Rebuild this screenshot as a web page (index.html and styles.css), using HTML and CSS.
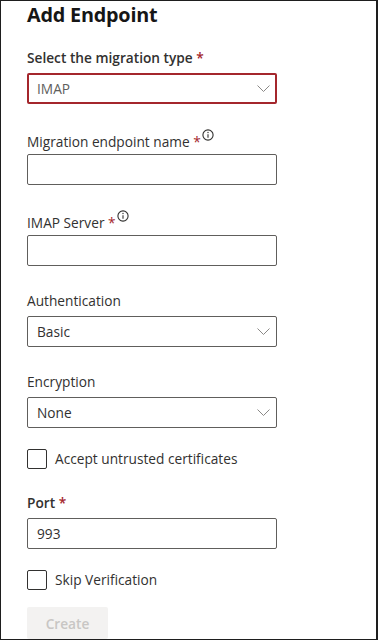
FILE: index.html
```html
<!DOCTYPE html>
<html lang="en">
<head>
<meta charset="utf-8">
<title>Add Endpoint</title>
<link rel="stylesheet" href="styles.css">
</head>
<body>
<div class="frame">
  <h1 class="title">Add Endpoint</h1>

  <div class="field first">
    <div class="label strong">Select the migration type<span class="req"> *</span></div>
    <div class="select error">
      <span class="value muted">IMAP</span>
      <svg class="chev" width="13" height="7" viewBox="0 0 13 7"><path d="M0.5 0.5 L6.5 6.5 L12.5 0.5" fill="none" stroke="#8a8886" stroke-width="1"/></svg>
    </div>
  </div>

  <div class="field">
    <div class="label">Migration endpoint name<span class="req"> *</span><svg class="info" width="12" height="12" viewBox="0 0 12 12"><circle cx="6" cy="6" r="5.1" fill="none" stroke="#323130" stroke-width="1.1"/><line x1="6" y1="5.2" x2="6" y2="8.8" stroke="#323130" stroke-width="1.1"/><circle cx="6" cy="3.5" r="0.7" fill="#323130"/></svg></div>
    <div class="input"></div>
  </div>

  <div class="field">
    <div class="label">IMAP Server<span class="req"> *</span><svg class="info" width="12" height="12" viewBox="0 0 12 12"><circle cx="6" cy="6" r="5.1" fill="none" stroke="#323130" stroke-width="1.1"/><line x1="6" y1="5.2" x2="6" y2="8.8" stroke="#323130" stroke-width="1.1"/><circle cx="6" cy="3.5" r="0.7" fill="#323130"/></svg></div>
    <div class="input"></div>
  </div>

  <div class="field">
    <div class="label">Authentication</div>
    <div class="select">
      <span class="value">Basic</span>
      <svg class="chev" width="13" height="7" viewBox="0 0 13 7"><path d="M0.5 0.5 L6.5 6.5 L12.5 0.5" fill="none" stroke="#8a8886" stroke-width="1"/></svg>
    </div>
  </div>

  <div class="field">
    <div class="label">Encryption</div>
    <div class="select">
      <span class="value">None</span>
      <svg class="chev" width="13" height="7" viewBox="0 0 13 7"><path d="M0.5 0.5 L6.5 6.5 L12.5 0.5" fill="none" stroke="#8a8886" stroke-width="1"/></svg>
    </div>
  </div>

  <label class="check check-1">
    <span class="box"></span>
    <span class="check-text">Accept untrusted certificates</span>
  </label>

  <div class="field port">
    <div class="label strong">Port<span class="req"> *</span></div>
    <div class="input"><span class="value">993</span></div>
  </div>

  <label class="check check-2">
    <span class="box"></span>
    <span class="check-text">Skip Verification</span>
  </label>

  <button class="btn" disabled>Create</button>
</div>
</body>
</html>
```

FILE: styles.css
```css
html, body {
  margin: 0;
  padding: 0;
  background: #ffffff;
}

.frame {
  box-sizing: border-box;
  width: 378px;
  height: 640px;
  border: 1px solid #1e1e1e;
  border-right-width: 2px;
  padding: 1px 0 0 26px;
  overflow: hidden;
  font-family: "Open Sans", "Noto Sans", sans-serif;
  font-size: 13.7px;
  color: #323130;
  display: flex;
  flex-direction: column;
  align-items: flex-start;
}

.title {
  margin: 0;
  font-size: 19.8px;
  line-height: 26px;
  font-weight: 700;
  color: #161616;
  letter-spacing: -0.2px;
}

.field {
  width: 250px;
  margin-top: 20px;
}

.field.first {
  margin-top: 15px;
}

.field.port {
  margin-top: 19px;
}

.label {
  padding: 5px 0;
  line-height: 20px;
  height: 20px;
  white-space: nowrap;
}

.label.strong {
  font-weight: 600;
}

.req {
  color: #a4262c;
}

.info {
  display: inline-block;
  vertical-align: 6px;
  margin-left: 1px;
}

.input,
.select {
  box-sizing: border-box;
  height: 31px;
  border: 1px solid #605e5c;
  border-radius: 2px;
  display: flex;
  align-items: center;
  padding: 0 6px 0 9px;
}

.select {
  justify-content: space-between;
}

.select.error {
  border: 2px solid #a4262c;
  padding: 0 5px 0 8px;
}

.value {
  line-height: 20px;
  color: #323130;
}

.value.muted {
  color: #605e5c;
}

.chev {
  display: block;
}

.check {
  display: flex;
  align-items: center;
  gap: 8px;
  height: 20px;
}

.check-1 {
  margin-top: 21px;
}

.check-2 {
  margin-top: 21px;
}

.box {
  box-sizing: border-box;
  width: 20px;
  height: 20px;
  border: 1px solid #323130;
  border-radius: 2px;
}

.check-text {
  line-height: 20px;
  color: #323130;
}

.btn {
  margin-top: 17px;
  width: 81px;
  height: 32px;
  border: none;
  border-radius: 2px;
  background: #f3f2f1;
  color: #c8c6c4;
  font-family: "Open Sans", "Noto Sans", sans-serif;
  font-size: 13.7px;
  font-weight: 600;
  padding: 0;
}
```
